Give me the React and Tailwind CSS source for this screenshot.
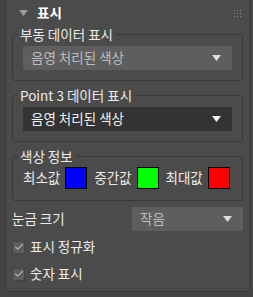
import { Check } from 'lucide-react';

const font = { fontFamily: '"Noto Sans CJK KR", "Noto Sans", sans-serif' };

function Caret({ className }) {
  return (
    <svg width="9" height="6" viewBox="0 0 9 6" className={className}>
      <path d="M0 0 H9 L4.5 6 Z" fill="currentColor" />
    </svg>
  );
}

function Dropdown({ label, dark }) {
  return (
    <div
      className={`flex h-[24px] items-center justify-between pl-[8px] pr-[11px] text-[13.5px] leading-none ${
        dark ? 'bg-[#333333] text-[#f2f2f2]' : 'bg-[#5e5e5e] text-[#bdbdbd]'
      }`}
    >
      <span>{label}</span>
      <Caret className={dark ? 'text-[#f2f2f2]' : 'text-[#dcdcdc]'} />
    </div>
  );
}

function Group({ title, children, className = '', pt = 'pt-[4px]', pb = 'pb-[10px]' }) {
  return (
    <fieldset className={`min-w-0 rounded-[3px] border border-[#393939] px-[10px] ${pt} ${pb} ${className}`}>
      <legend className="-ml-[5px] px-[2px] text-[13.5px] leading-[16px] text-[#ececec]">{title}</legend>
      {children}
    </fieldset>
  );
}

function Swatch({ color }) {
  return <div className={`h-[22px] w-[22px] shrink-0 border border-black ${color}`} />;
}

function CheckRow({ label }) {
  return (
    <div className="flex h-[24px] items-center gap-[5px]">
      <div className="flex h-[13px] w-[13px] items-center justify-center border border-[#444444] bg-[#5d5d5d]">
        <Check className="h-[10px] w-[10px] text-[#b0b0b0]" strokeWidth={3} />
      </div>
      <span className="text-[13.5px] leading-none text-[#ececec]">{label}</span>
    </div>
  );
}

export default function App() {
  return (
    <div className="h-[297px] w-[253px] bg-[#444444] pl-[5px] pr-[3px]" style={font}>
      <div className="flex h-[292px] flex-col rounded-[3px] rounded-t-none border border-t-0 border-[#393939] bg-[#4b4b4b] px-[6px]">
        <div className="flex h-[26px] items-center justify-between">
          <div className="flex items-center gap-[9px] pl-[7px]">
            <Caret className="text-[#9a9a9a]" />
            <span className="text-[13.5px] font-bold leading-none text-white">표시</span>
          </div>
          <div className="mr-[2px] grid grid-cols-3 gap-[2px]">
            {Array.from({ length: 9 }).map((_, i) => (
              <div key={i} className="h-[1px] w-[1px] bg-[#8a8a8a]" />
            ))}
          </div>
        </div>

        <Group title="부동 데이터 표시">
          <Dropdown label="음영 처리된 색상" />
        </Group>

        <Group title="Point 3 데이터 표시" className="mt-[6px]">
          <Dropdown label="음영 처리된 색상" dark />
        </Group>

        <Group title="색상 정보" className="mt-[6px]" pt="pt-[3px]" pb="pb-[11px]">
          <div className="flex h-[22px] items-center whitespace-nowrap text-[13.5px] leading-none text-[#ececec]">
            <span className="mr-[5px]">최소값</span>
            <Swatch color="bg-[#0000ff]" />
            <span className="ml-[7px] mr-[5px]">중간값</span>
            <Swatch color="bg-[#00ff00]" />
            <span className="ml-[7px] mr-[5px]">최대값</span>
            <Swatch color="bg-[#ff0000]" />
          </div>
        </Group>

        <div className="mt-[6px] flex h-[24px] items-center justify-between">
          <span className="text-[13.5px] leading-none text-[#ececec]">눈금 크기</span>
          <div className="w-[111px]">
            <Dropdown label="작음" />
          </div>
        </div>

        <div className="mt-[4px] flex flex-col gap-[3px]">
          <CheckRow label="표시 정규화" />
          <CheckRow label="숫자 표시" />
        </div>
      </div>
    </div>
  );
}
